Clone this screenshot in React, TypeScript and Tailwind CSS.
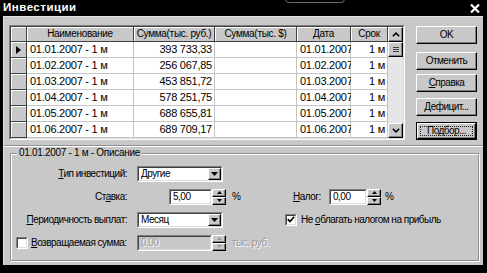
import React from "react";

const raised =
  "bg-[#c8c8c8] border border-t-white border-l-white border-r-black border-b-black shadow-[inset_-1px_-1px_0_#808080]";

function Sunken({
  className = "",
  inner = "",
  children,
}: {
  className?: string;
  inner?: string;
  children?: React.ReactNode;
}) {
  return (
    <div className={`border border-t-[#808080] border-l-[#808080] border-r-white border-b-white ${className}`}>
      <div
        className={`w-full h-full border border-t-[#404040] border-l-[#404040] border-r-[#dcdcdc] border-b-[#dcdcdc] ${inner}`}
      >
        {children}
      </div>
    </div>
  );
}

function DownTri({ color = "#000" }: { color?: string }) {
  return (
    <svg width="7" height="4" viewBox="0 0 7 4">
      <polygon points="0,0 7,0 3.5,4" fill={color} />
    </svg>
  );
}
function UpTri({ color = "#000" }: { color?: string }) {
  return (
    <svg width="5" height="3" viewBox="0 0 5 3">
      <polygon points="0,3 5,3 2.5,0" fill={color} />
    </svg>
  );
}
function SmallDown({ color = "#000" }: { color?: string }) {
  return (
    <svg width="5" height="3" viewBox="0 0 5 3">
      <polygon points="0,0 5,0 2.5,3" fill={color} />
    </svg>
  );
}

function Select({ value, w }: { value: string; w: string }) {
  return (
    <Sunken className={`h-[16px] ${w}`} inner="bg-white flex items-center">
      <span className="flex-1 pl-[2px]">{value}</span>
      <div className={`${raised} w-[13px] h-full flex items-center justify-center`}>
        <DownTri />
      </div>
    </Sunken>
  );
}

function Spin({ disabled = false }: { disabled?: boolean }) {
  const c = disabled ? "#9a9a9a" : "#000";
  return (
    <div className="w-[14px] h-[16px] flex flex-col">
      <div className={`${raised} flex-1 flex items-center justify-center`}>
        <UpTri color={c} />
      </div>
      <div className={`${raised} flex-1 flex items-center justify-center`}>
        <SmallDown color={c} />
      </div>
    </div>
  );
}

const rows = [
  ["01.01.2007 - 1 м", "393 733,33", "01.01.2007"],
  ["01.02.2007 - 1 м", "256 067,85", "01.02.2007"],
  ["01.03.2007 - 1 м", "453 851,72", "01.03.2007"],
  ["01.04.2007 - 1 м", "578 251,75", "01.04.2007"],
  ["01.05.2007 - 1 м", "688 655,81", "01.05.2007"],
  ["01.06.2007 - 1 м", "689 709,17", "01.06.2007"],
];

const hdr =
  "h-full flex items-center justify-center border-r border-b border-r-[#404040] border-b-[#404040] shadow-[inset_1px_1px_0_white] bg-[#c8c8c8] whitespace-nowrap";
const cell =
  "h-full flex items-center border-r border-b border-[#c4c4c4] bg-white text-[11px] tracking-[-0.25px] whitespace-nowrap";

function Btn({ children, def = false }: { children: React.ReactNode; def?: boolean }) {
  if (def) {
    return (
      <div className="w-[61px] h-[18px] border border-black">
        <div className={`${raised} w-full h-full flex items-center justify-center p-[2px]`}>
          <div className="w-full h-full border border-dotted border-[#202020] flex items-center justify-center">
            {children}
          </div>
        </div>
      </div>
    );
  }
  return <div className={`${raised} w-[61px] h-[18px] flex items-center justify-center`}>{children}</div>;
}

export default function App() {
  return (
    <div className="w-[487px] h-[273px] bg-black flex flex-col overflow-hidden [font-family:'Liberation_Sans',Arial,sans-serif] text-[10px] text-black leading-none tracking-[-0.3px]">
      {/* Title bar */}
      <div className="h-[16px] flex items-center justify-between pl-[3px] pr-[7px] text-white relative">
        <span className="font-bold text-[11.5px] tracking-[0.5px]">Инвестиции</span>
        <div className="absolute left-[285px] top-[-6px] w-[60px] h-[9px] rounded-b-[4px] border border-[#6a6a6a]" />
        <svg width="10" height="9" viewBox="0 0 10 9">
          <path d="M1 0.5 L9 8.5 M9 0.5 L1 8.5" stroke="white" strokeWidth="2.2" />
        </svg>
      </div>

      {/* Body */}
      <div className="ml-[3px] mr-[4px] h-[249px] bg-[#c8c8c8] border-t border-l border-[#e4e4e4] flex flex-col">
        <div className="flex pt-[8px] pl-[5px]">
          {/* Grid */}
          <Sunken className="w-[396px] h-[115px]" inner="flex bg-white">
            <div className="flex flex-col w-[377px]">
              <div className="flex h-[15px]">
                <div className={`${hdr} w-[16px]`} />
                <div className={`${hdr} w-[107px]`}>Наименование</div>
                <div className={`${hdr} w-[81px]`}>Сумма(тыс. руб.)</div>
                <div className={`${hdr} w-[82px]`}>Сумма(тыс. $)</div>
                <div className={`${hdr} w-[54px]`}>Дата</div>
                <div className={`${hdr} w-[37px]`}>Срок</div>
              </div>
              {rows.map((r, i) => (
                <div key={i} className="flex h-[16px]">
                  <div className={`${hdr} w-[16px]`}>
                    {i === 0 && (
                      <svg width="5" height="8" viewBox="0 0 5 8">
                        <polygon points="0,0 5,4 0,8" fill="#000" />
                      </svg>
                    )}
                  </div>
                  <div className={`${cell} w-[107px] pl-[3px]`}>{r[0]}</div>
                  <div className={`${cell} w-[81px] justify-end pr-[2px]`}>{r[1]}</div>
                  <div className={`${cell} w-[82px]`} />
                  <div className={`${cell} w-[54px] pl-[3px]`}>{r[2]}</div>
                  <div className={`${cell} w-[37px] justify-end pr-[2px]`}>1 м</div>
                </div>
              ))}
            </div>
            {/* Scrollbar */}
            <div className="w-[15px] flex flex-col bg-[#e6e6e6]">
              <div className={`${raised} h-[15px] flex items-center justify-center`}>
                <svg width="8" height="5" viewBox="0 0 8 5">
                  <polyline points="0.8,4.3 4,1.2 7.2,4.3" fill="none" stroke="#000" strokeWidth="1.6" />
                </svg>
              </div>
              <div className={`${raised} h-[15px] flex flex-col items-center justify-center gap-[1px]`}>
                <div className="w-[6px] h-[1px] bg-[#404040]" />
                <div className="w-[6px] h-[1px] bg-[#404040]" />
                <div className="w-[6px] h-[1px] bg-[#404040]" />
              </div>
              <div className="flex-1" />
              <div className={`${raised} h-[15px] flex items-center justify-center`}>
                <svg width="8" height="5" viewBox="0 0 8 5">
                  <polyline points="0.8,0.7 4,3.8 7.2,0.7" fill="none" stroke="#000" strokeWidth="1.6" />
                </svg>
              </div>
            </div>
          </Sunken>

          {/* Buttons */}
          <div className="ml-[11px] flex flex-col tracking-[-0.5px]">
            <div className="mt-[1px]">
              <Btn>OK</Btn>
            </div>
            <div className="mt-[8px]">
              <Btn>Отменить</Btn>
            </div>
            <div className="mt-[4px]">
              <Btn>
                <span>
                  <span className="underline">С</span>правка
                </span>
              </Btn>
            </div>
            <div className="mt-[6px]">
              <Btn>Дефицит...</Btn>
            </div>
            <div className="mt-[6px]">
              <Btn def>Подбор...</Btn>
            </div>
          </div>
        </div>

        {/* Separator */}
        <div className="mt-[5px] h-[2px] border-t border-b border-t-[#909090] border-b-white" />

        {/* Group box */}
        <fieldset className="ml-[6px] w-[469px] h-[114px] border border-[#909090] shadow-[inset_1px_1px_0_white,1px_1px_0_white] px-[1px] tracking-[-0.5px]">
          <legend className="ml-[5px] px-[2px] bg-[#c8c8c8] leading-[12px] tracking-[-0.3px]">
            01.01.2007 - 1 м - Описание
          </legend>
          <div className="flex flex-col mt-[3px]">
            {/* Row 1 */}
            <div className="h-[23px] flex items-center">
              <div className="w-[118px] text-right pr-[3px] whitespace-nowrap">
                <span className="underline">Т</span>ип инвестиций:
              </div>
              <div className="ml-[7px]">
                <Select value="Другие" w="w-[86px]" />
              </div>
            </div>
            {/* Row 2 */}
            <div className="h-[23px] flex items-center">
              <div className="w-[118px] text-right pr-[3px] whitespace-nowrap">
                Ст<span className="underline">а</span>вка:
              </div>
              <div className="ml-[7px] w-[89px] flex justify-end">
                <Sunken className="w-[43px] h-[16px]" inner="bg-white flex items-center pl-[2px]">
                  5,00
                </Sunken>
                <Spin />
              </div>
              <div className="w-[67px] pl-[6px]">%</div>
              <div className="w-[36px] whitespace-nowrap">
                <span className="underline">Н</span>алог:
              </div>
              <Sunken className="w-[38px] h-[16px]" inner="bg-white flex items-center pl-[2px]">
                0,00
              </Sunken>
              <Spin />
              <div className="ml-[4px]">%</div>
            </div>
            {/* Row 3 */}
            <div className="h-[23px] flex items-center">
              <div className="w-[118px] text-right pr-[3px] whitespace-nowrap">
                <span className="underline">П</span>ериодичность выплат:
              </div>
              <div className="ml-[7px]">
                <Select value="Месяц" w="w-[86px]" />
              </div>
              <div className="ml-[62px]">
                <Sunken className="w-[12px] h-[12px]" inner="bg-white flex items-center justify-center">
                  <svg width="8" height="7" viewBox="0 0 8 7">
                    <polyline points="0.8,3.2 3,5.5 7.2,0.8" fill="none" stroke="#000" strokeWidth="1.7" />
                  </svg>
                </Sunken>
              </div>
              <div className="ml-[4px] whitespace-nowrap">
                Не <span className="underline">о</span>благать налогом на прибыль
              </div>
            </div>
            {/* Row 4 */}
            <div className="h-[23px] flex items-center">
              <div className="w-[118px] flex items-center pl-[4px]">
                <Sunken className="w-[12px] h-[12px] shrink-0" inner="bg-white" />
                <div className="ml-[3px] whitespace-nowrap">
                  <span className="underline">В</span>озвращаемая сумма:
                </div>
              </div>
              <div className="ml-[7px] w-[89px] flex justify-end">
                <Sunken
                  className="w-[75px] h-[16px]"
                  inner="bg-[#c8c8c8] flex items-center pl-[2px] text-[#9a9a9a] [text-shadow:1px_1px_0_white]"
                >
                  0,00
                </Sunken>
                <Spin disabled />
              </div>
              <div className="ml-[6px] text-[#9a9a9a] [text-shadow:1px_1px_0_white] whitespace-nowrap">тыс. руб.</div>
            </div>
          </div>
        </fieldset>
      </div>
    </div>
  );
}
